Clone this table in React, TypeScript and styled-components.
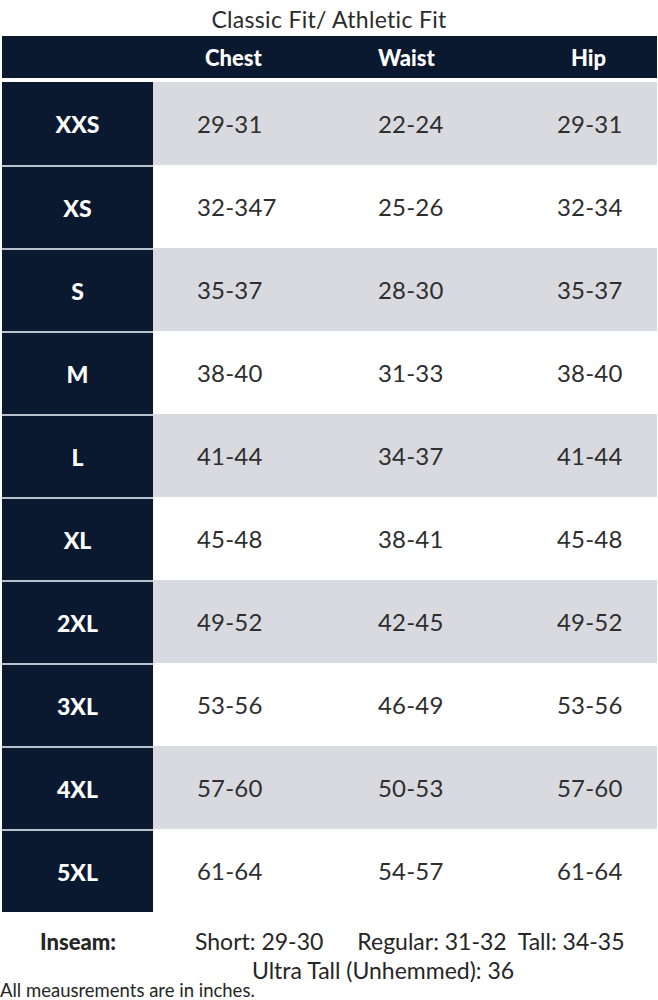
import React from "react";
import styled, { createGlobalStyle } from "styled-components";

const Global = createGlobalStyle`
  html, body { margin: 0; padding: 0; background: #ffffff; }
  body { font-family: Lato, "Open Sans", sans-serif; color: #262626; }
`;

const NAVY = "#0a1830";
const GRAY = "#d8dadf";

const Page = styled.div`
  width: 658px;
  height: 1000px;
  overflow: hidden;
  display: flex;
  flex-direction: column;
  & > * { flex-shrink: 0; }
`;

const Title = styled.div`
  height: 36px;
  display: flex;
  align-items: center;
  justify-content: center;
  font-size: 23px;
  font-weight: 400;
  color: #2b2b2b;
  letter-spacing: 0.3px;
  padding-top: 1px;
  box-sizing: border-box;
`;

const Table = styled.div`
  margin-left: 2px;
  width: 655px;
  display: flex;
  flex-direction: column;
`;

const HeaderRow = styled.div`
  height: 42px;
  background: ${NAVY};
  display: grid;
  grid-template-columns: 195px 181px 179px 1fr;
  align-items: center;
  margin-bottom: 4px;
  flex-shrink: 0;
`;

const HeadCell = styled.div<{ $shift?: number }>`
  padding-left: ${(p) => p.$shift ?? 0}px;
  color: #ffffff;
  font-weight: 900;
  font-size: 22px;
  letter-spacing: 0px;
`;

const Row = styled.div<{ $shade: boolean }>`
  height: 83px;
  flex-shrink: 0;
  display: grid;
  grid-template-columns: 151px 44px 181px 179px 1fr;
  align-items: stretch;
  background: ${(p) => (p.$shade ? GRAY : "#ffffff")};
`;

const SizeCell = styled.div<{ $first: boolean }>`
  background: ${NAVY};
  color: #ffffff;
  font-weight: 900;
  font-size: 23px;
  display: flex;
  align-items: center;
  justify-content: center;
  border-top: ${(p) => (p.$first ? "none" : "2px solid #b9c1cd")};
  box-sizing: border-box;
`;

const Spacer = styled.div``;

const ValueCell = styled.div`
  display: flex;
  align-items: center;
  font-size: 24px;
  font-weight: 400;
  color: #2e2e2e;
  letter-spacing: 0.2px;
`;

const Footer = styled.div`
  margin-top: 15px;
  display: flex;
  flex-direction: column;
`;

const InseamLine = styled.div`
  display: flex;
  align-items: baseline;
  font-size: 23px;
  color: #262626;
  height: 30px;
  line-height: 28px;
`;

const InseamLabel = styled.span`
  font-weight: 900;
  font-size: 22px;
  margin-left: 40px;
  width: 155px;
`;

const InseamValue = styled.span<{ $gap: number }>`
  margin-right: ${(p) => p.$gap}px;
`;

const UltraLine = styled.div`
  font-size: 23px;
  color: #262626;
  padding-left: 252px;
  height: 24px;
  line-height: 26px;
`;

const Note = styled.div`
  font-size: 18.5px;
  color: #262626;
  line-height: 19px;
`;

const rows: [string, string, string, string][] = [
  ["XXS", "29-31", "22-24", "29-31"],
  ["XS", "32-347", "25-26", "32-34"],
  ["S", "35-37", "28-30", "35-37"],
  ["M", "38-40", "31-33", "38-40"],
  ["L", "41-44", "34-37", "41-44"],
  ["XL", "45-48", "38-41", "45-48"],
  ["2XL", "49-52", "42-45", "49-52"],
  ["3XL", "53-56", "46-49", "53-56"],
  ["4XL", "57-60", "50-53", "57-60"],
  ["5XL", "61-64", "54-57", "61-64"],
];

export default function App() {
  return (
    <Page>
      <Global />
      <Title>Classic Fit/ Athletic Fit</Title>
      <Table>
        <HeaderRow>
          <span />
          <HeadCell $shift={8}>Chest</HeadCell>
          <HeadCell $shift={0}>Waist</HeadCell>
          <HeadCell $shift={14}>Hip</HeadCell>
        </HeaderRow>
        {rows.map((r, i) => (
          <Row key={r[0]} $shade={i % 2 === 0}>
            <SizeCell $first={i === 0}>{r[0]}</SizeCell>
            <Spacer />
            <ValueCell>{r[1]}</ValueCell>
            <ValueCell>{r[2]}</ValueCell>
            <ValueCell>{r[3]}</ValueCell>
          </Row>
        ))}
      </Table>
      <Footer>
        <InseamLine>
          <InseamLabel>Inseam:</InseamLabel>
          <InseamValue $gap={34}>Short: 29-30</InseamValue>
          <InseamValue $gap={11}>Regular: 31-32</InseamValue>
          <InseamValue $gap={0}>Tall: 34-35</InseamValue>
        </InseamLine>
        <UltraLine>Ultra Tall (Unhemmed): 36</UltraLine>
        <Note>All meausrements are in inches.</Note>
      </Footer>
    </Page>
  );
}
